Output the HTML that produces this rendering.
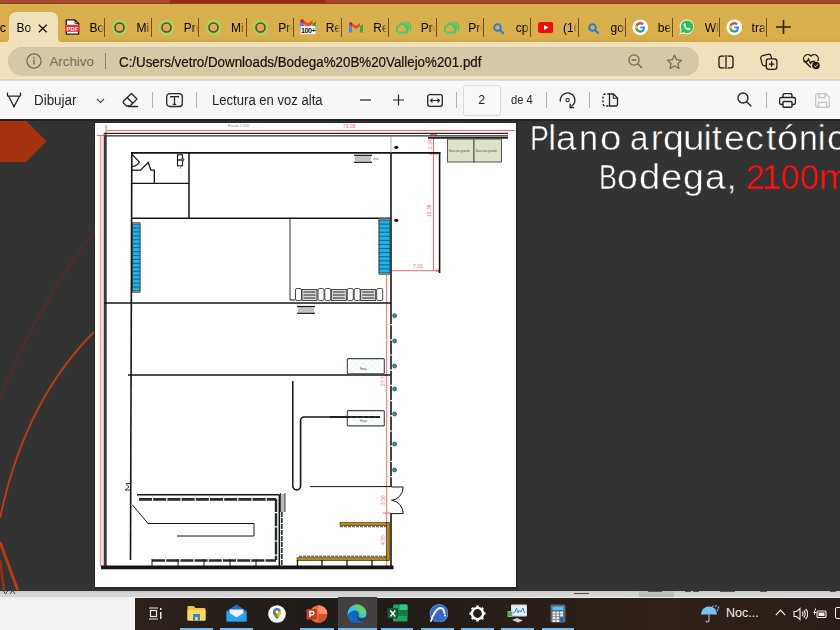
<!DOCTYPE html>
<html><head><meta charset="utf-8">
<style>
*{margin:0;padding:0;box-sizing:border-box}
html,body{width:840px;height:630px;overflow:hidden;background:#333;font-family:"Liberation Sans",sans-serif}
.a{position:absolute}
#topred{left:0;top:0;width:840px;height:4px;background:linear-gradient(90deg,#ac4632 0,#ac4632 170px,#a2261a 170px,#a2261a 326px,#a8442e 326px)}#topln{left:0;top:3px;width:840px;height:1px;background:#7a4a22}

#tabs{left:0;top:4px;width:840px;height:38px;background:#f0e1bb}#gl{left:0;top:4px;width:9px;height:38.5px;background:linear-gradient(#d9af4c 85%,#cea445);border-radius:0 0 5px 0}#gr{left:58px;top:4px;width:782px;height:38.5px;background:linear-gradient(#d9af4c 85%,#cea445);border-radius:0 0 0 5px}
#acttab{left:9px;top:12px;width:49px;height:31px;background:#f0e1bb;border-radius:7px 7px 0 0}#acttop{left:9px;top:4px;width:49px;height:16px;background:#d8ad4a}
.tt{font-size:12px;color:#000;white-space:nowrap;overflow:hidden}
.sep{width:1px;height:19px;top:18px;background:#6e5020}
#nav{left:0;top:42px;width:840px;height:37px;background:#f0e1bb}
#pill{left:8px;top:47.3px;width:691px;height:28.7px;background:#d5c8a4;border-radius:15px;box-shadow:inset 0 0.6px 0 #cdbf9a}
#tool{left:0;top:79.5px;width:840px;height:39.5px;background:#f7f7f7;border-top:1px solid #dcdcdc}#navln{left:0;top:77.8px;width:840px;height:2.6px;background:linear-gradient(#f5e6c4 0,#f5e6c4 40%,#d0c4a0 50%,#d8d2c2 80%,#e8e8e8)}
#toolb{left:0;top:118px;width:840px;height:1px;background:#fff}
#toolb2{left:0;top:119px;width:840px;height:2px;background:#232323}
#content{left:0;top:121px;width:840px;height:469px;background:#333}
#page{left:95px;top:123px;width:420.5px;height:464.2px;background:#fff;box-shadow:0.5px 0.5px 0 1.5px #272727}
#band{left:0;top:590.5px;width:840px;height:7px;background:linear-gradient(#c6c6c6,#d4d4d4 30%,#d6d6d6 80%,#ececec 85%,#ececec)}
#bl{left:0;top:597.5px;width:135px;height:33px;background:#f2f2f2}
#task{left:135px;top:597.5px;width:705px;height:33px;background:linear-gradient(90deg,#2e221b 0,#231e1a 16%,#1f1c19 27%,#241d18 45%,#2f2018 75%,#2a1e18 100%)}
.ts{font-size:14px;color:#222}
.tsep{width:1px;height:16px;top:92px;background:#b4b4b4}

.gl{font-size:35px;-webkit-text-stroke:0.45px #333;line-height:40px;white-space:nowrap;transform-origin:0 0}
</style></head><body>
<div id="topred" class="a"></div><div id="topln" class="a"></div>
<div id="tabs" class="a"></div><div id="gl" class="a"></div><div id="gr" class="a"></div><div id="acttop" class="a"></div>
<div id="acttab" class="a"></div>
<svg class="a" style="left:64.7px;top:19.4px" width="15" height="16" viewBox="0 0 15 16"><path d="M1.3 0.9h8.6l3.7 3.7V15.1H1.3z" fill="#fff" stroke="#241c18" stroke-width="1.4" stroke-linejoin="round"/><path d="M10 1v3.6h3.6" fill="none" stroke="#241c18" stroke-width="0.9"/><rect x="0.4" y="5.8" width="14" height="7" fill="#f2283a"/><text x="7.4" y="11.6" font-size="5.8" font-weight="bold" fill="#fff" text-anchor="middle" font-family="Liberation Sans">PDF</text></svg>
<div class="a tt" style="left:89.5px;top:19.5px;width:15px;height:16px;line-height:16px;-webkit-mask-image:linear-gradient(90deg,#000 55%,transparent 95%)">Bodega</div>
<svg class="a" style="left:110.6px;top:18.8px" width="17" height="17" viewBox="0 0 17 17"><circle cx="8.5" cy="8.5" r="6.9" fill="none" stroke="#94e060" stroke-width="1.7"/><circle cx="8.5" cy="8.5" r="4.5" fill="none" stroke="#5a4e3c" stroke-width="1.6"/></svg>
<div class="a tt" style="left:136.6px;top:19.5px;width:15px;height:16px;line-height:16px;-webkit-mask-image:linear-gradient(90deg,#000 55%,transparent 95%)">Mi curso</div>
<svg class="a" style="left:157.7px;top:18.8px" width="17" height="17" viewBox="0 0 17 17"><circle cx="8.5" cy="8.5" r="6.9" fill="none" stroke="#94e060" stroke-width="1.7"/><circle cx="8.5" cy="8.5" r="4.5" fill="none" stroke="#5a4e3c" stroke-width="1.6"/></svg>
<div class="a tt" style="left:183.7px;top:19.5px;width:15px;height:16px;line-height:16px;-webkit-mask-image:linear-gradient(90deg,#000 55%,transparent 95%)">Presenta</div>
<svg class="a" style="left:205.0px;top:18.8px" width="17" height="17" viewBox="0 0 17 17"><circle cx="8.5" cy="8.5" r="6.9" fill="none" stroke="#94e060" stroke-width="1.7"/><circle cx="8.5" cy="8.5" r="4.5" fill="none" stroke="#5a4e3c" stroke-width="1.6"/></svg>
<div class="a tt" style="left:231.0px;top:19.5px;width:15px;height:16px;line-height:16px;-webkit-mask-image:linear-gradient(90deg,#000 55%,transparent 95%)">Mi curso</div>
<svg class="a" style="left:252.3px;top:18.8px" width="17" height="17" viewBox="0 0 17 17"><circle cx="8.5" cy="8.5" r="6.9" fill="none" stroke="#94e060" stroke-width="1.7"/><circle cx="8.5" cy="8.5" r="4.5" fill="none" stroke="#5a4e3c" stroke-width="1.6"/></svg>
<div class="a tt" style="left:278.3px;top:19.5px;width:15px;height:16px;line-height:16px;-webkit-mask-image:linear-gradient(90deg,#000 55%,transparent 95%)">Presenta</div>
<svg class="a" style="left:300.3px;top:19.3px" width="16" height="16" viewBox="0 0 16 16"><g transform="translate(0,0) scale(1)"><path d="M0 2v10h3.5V4.5z" fill="#4285f4"/><path d="M12.5 4.5V12H16V2z" fill="#34a853"/><path d="M0 2l8 6 8-6-2-2-6 4.5L2 0z" fill="#ea4335"/><path d="M16 2l-2-2-1.5 1.2v3.3z" fill="#fbbc04"/><path d="M0 2l2-2 1.5 1.2v3.3z" fill="#c5221f"/></g><rect x="0.5" y="7.2" width="15" height="8" fill="#fff"/><text x="8" y="14.2" font-size="7.2" font-weight="bold" fill="#111" text-anchor="middle" font-family="Liberation Sans" letter-spacing="-0.5">100+</text></svg>
<div class="a tt" style="left:325.8px;top:19.5px;width:15px;height:16px;line-height:16px;-webkit-mask-image:linear-gradient(90deg,#000 55%,transparent 95%)">Recibidos</div>
<svg class="a" style="left:348.8px;top:22.3px" width="14" height="10.5" viewBox="0 0 14 10.5"><g transform="translate(0,0) scale(0.875)"><path d="M0 2v10h3.5V4.5z" fill="#4285f4"/><path d="M12.5 4.5V12H16V2z" fill="#34a853"/><path d="M0 2l8 6 8-6-2-2-6 4.5L2 0z" fill="#ea4335"/><path d="M16 2l-2-2-1.5 1.2v3.3z" fill="#fbbc04"/><path d="M0 2l2-2 1.5 1.2v3.3z" fill="#c5221f"/></g></svg>
<div class="a tt" style="left:373.3px;top:19.5px;width:15px;height:16px;line-height:16px;-webkit-mask-image:linear-gradient(90deg,#000 55%,transparent 95%)">Recibidos</div>
<svg class="a" style="left:395.3px;top:21.3px" width="17" height="13" viewBox="0 0 17 13"><path d="M2 11.5V6.5L7 2l5 4.5v5H5.5l-2 1.2" fill="none" stroke="#3acc78" stroke-width="1.8" stroke-linejoin="round"/><path d="M9.5 1.5l3.5 3v6" fill="none" stroke="#3acc78" stroke-width="1.5"/><path d="M12 0.8l3.5 3v6" fill="none" stroke="#3acc78" stroke-width="1.5"/></svg>
<div class="a tt" style="left:420.8px;top:19.5px;width:15px;height:16px;line-height:16px;-webkit-mask-image:linear-gradient(90deg,#000 55%,transparent 95%)">Propiedad</div>
<svg class="a" style="left:442.8px;top:21.3px" width="17" height="13" viewBox="0 0 17 13"><path d="M2 11.5V6.5L7 2l5 4.5v5H5.5l-2 1.2" fill="none" stroke="#3acc78" stroke-width="1.8" stroke-linejoin="round"/><path d="M9.5 1.5l3.5 3v6" fill="none" stroke="#3acc78" stroke-width="1.5"/><path d="M12 0.8l3.5 3v6" fill="none" stroke="#3acc78" stroke-width="1.5"/></svg>
<div class="a tt" style="left:468.3px;top:19.5px;width:15px;height:16px;line-height:16px;-webkit-mask-image:linear-gradient(90deg,#000 55%,transparent 95%)">Propiedad</div>
<svg class="a" style="left:493.3px;top:22.8px" width="11" height="11" viewBox="0 0 11 11"><circle cx="4.5" cy="4.5" r="3.3" fill="none" stroke="#2a7fd4" stroke-width="2"/><path d="M7 7l3 3" stroke="#2a7fd4" stroke-width="2.2" stroke-linecap="round"/></svg>
<div class="a tt" style="left:515.8px;top:19.5px;width:15px;height:16px;line-height:16px;-webkit-mask-image:linear-gradient(90deg,#000 55%,transparent 95%)">cpanel</div>
<svg class="a" style="left:537.9px;top:21.8px" width="15.5" height="11" viewBox="0 0 15.5 11"><rect x="0" y="0" width="15.5" height="11" rx="3" fill="#f40a0a"/><path d="M6 3v5l4.5-2.5z" fill="#fff"/></svg>
<div class="a tt" style="left:563.1px;top:19.5px;width:15px;height:16px;line-height:16px;-webkit-mask-image:linear-gradient(90deg,#000 55%,transparent 95%)">(16) YouTube</div>
<svg class="a" style="left:588.0px;top:22.8px" width="11" height="11" viewBox="0 0 11 11"><circle cx="4.5" cy="4.5" r="3.3" fill="none" stroke="#2a7fd4" stroke-width="2"/><path d="M7 7l3 3" stroke="#2a7fd4" stroke-width="2.2" stroke-linecap="round"/></svg>
<div class="a tt" style="left:610.5px;top:19.5px;width:15px;height:16px;line-height:16px;-webkit-mask-image:linear-gradient(90deg,#000 55%,transparent 95%)">google</div>
<svg class="a" style="left:632.0px;top:19.0px" width="16.6" height="16.6" viewBox="0 0 16 16"><circle cx="8" cy="8" r="7.6" fill="#fff"/><path d="M12.4 7.3H8v1.8h2.6c-.3 1.2-1.3 2-2.6 2a3 3 0 1 1 1.9-5.4l1.3-1.3A4.9 4.9 0 1 0 8 13c2.7 0 4.6-1.9 4.6-4.7 0-.4 0-.7-.2-1z" fill="#4285f4"/><path d="M3.6 5.6L5.2 6.8A3 3 0 0 1 9.9 5.7l1.3-1.3A4.9 4.9 0 0 0 3.6 5.6z" fill="#ea4335"/><path d="M3.1 8a4.9 4.9 0 0 0 .5 2.2l1.6-1.2a3 3 0 0 1 0-2.2L3.6 5.6A4.9 4.9 0 0 0 3.1 8z" fill="#fbbc05"/><path d="M8 12.9a4.9 4.9 0 0 1-4.4-2.7l1.6-1.2A3 3 0 0 0 8 11.1c.8 0 1.4-.2 1.9-.6l1.5 1.2A4.8 4.8 0 0 1 8 12.9z" fill="#34a853"/></svg>
<div class="a tt" style="left:657.8px;top:19.5px;width:15px;height:16px;line-height:16px;-webkit-mask-image:linear-gradient(90deg,#000 55%,transparent 95%)">beneficios</div>
<svg class="a" style="left:679.3px;top:19.3px" width="16" height="16" viewBox="0 0 16 16"><path d="M8 0.5a7.3 7.3 0 0 0-6.3 11l-1.2 4 4.1-1.1A7.3 7.3 0 1 0 8 0.5z" fill="#fff"/><path d="M8 1.6a6.3 6.3 0 0 0-5.4 9.5l-.9 3 3.1-.8A6.3 6.3 0 1 0 8 1.6z" fill="#2bc152"/><path d="M5.3 4.2c.2-.2.6-.2.8 0l.9 1.7c.1.3 0 .5-.2.7l-.5.5c.5 1 1.3 1.8 2.3 2.3l.5-.5c.2-.2.5-.3.7-.2l1.7.8c.2.1.3.5.1.8-.5 1-1.4 1.3-2.3 1-2.3-.7-4.1-2.5-4.7-4.7-.2-.9.2-1.8 1-2.4z" fill="#fff"/></svg>
<div class="a tt" style="left:704.8px;top:19.5px;width:15px;height:16px;line-height:16px;-webkit-mask-image:linear-gradient(90deg,#000 55%,transparent 95%)">WhatsApp</div>
<svg class="a" style="left:725.8px;top:19.0px" width="16.6" height="16.6" viewBox="0 0 16 16"><circle cx="8" cy="8" r="7.6" fill="#fff"/><path d="M12.4 7.3H8v1.8h2.6c-.3 1.2-1.3 2-2.6 2a3 3 0 1 1 1.9-5.4l1.3-1.3A4.9 4.9 0 1 0 8 13c2.7 0 4.6-1.9 4.6-4.7 0-.4 0-.7-.2-1z" fill="#4285f4"/><path d="M3.6 5.6L5.2 6.8A3 3 0 0 1 9.9 5.7l1.3-1.3A4.9 4.9 0 0 0 3.6 5.6z" fill="#ea4335"/><path d="M3.1 8a4.9 4.9 0 0 0 .5 2.2l1.6-1.2a3 3 0 0 1 0-2.2L3.6 5.6A4.9 4.9 0 0 0 3.1 8z" fill="#fbbc05"/><path d="M8 12.9a4.9 4.9 0 0 1-4.4-2.7l1.6-1.2A3 3 0 0 0 8 11.1c.8 0 1.4-.2 1.9-.6l1.5 1.2A4.8 4.8 0 0 1 8 12.9z" fill="#34a853"/></svg>
<div class="a tt" style="left:751.6px;top:19.5px;width:15px;height:16px;line-height:16px;-webkit-mask-image:linear-gradient(90deg,#000 55%,transparent 95%)">traductor</div>
<div class="a sep" style="left:103.8px"></div>
<div class="a sep" style="left:150.9px"></div>
<div class="a sep" style="left:198.2px"></div>
<div class="a sep" style="left:245.5px"></div>
<div class="a sep" style="left:293.0px"></div>
<div class="a sep" style="left:340.5px"></div>
<div class="a sep" style="left:388.0px"></div>
<div class="a sep" style="left:435.5px"></div>
<div class="a sep" style="left:483.0px"></div>
<div class="a sep" style="left:530.3px"></div>
<div class="a sep" style="left:577.7px"></div>
<div class="a sep" style="left:625.0px"></div>
<div class="a sep" style="left:672.0px"></div>
<div class="a sep" style="left:718.8px"></div>
<div class="a sep" style="left:766.1px"></div>
<div class="a tt" style="left:-7px;top:20px;width:14px;height:16px;line-height:16px">pc</div>
<div class="a tt" style="left:16.5px;top:20px;width:15px;height:16px;line-height:16px;-webkit-mask-image:linear-gradient(90deg,#000 80%,transparent)">Bodega</div>
<svg class="a" style="left:38.0px;top:23.5px" width="9.5" height="9" viewBox="0 0 9.5 9"><path d="M0.8 0.8l7.9 7.4M8.7 0.8L0.8 8.2" stroke="#1a1408" stroke-width="1.3"/></svg>
<svg class="a" style="left:776.0px;top:20.0px" width="15" height="14" viewBox="0 0 15 14"><path d="M7.5 0v14M0 7h15" stroke="#2a2010" stroke-width="1.6"/></svg>
<div id="nav" class="a"></div>
<div id="pill" class="a"></div>
<svg class="a" style="left:25.5px;top:53.0px" width="16" height="16" viewBox="0 0 16 16"><circle cx="8" cy="8" r="7.1" fill="none" stroke="#736a5c" stroke-width="1.2"/><rect x="7.35" y="6.6" width="1.3" height="5" fill="#736a5c"/><circle cx="8" cy="4.6" r="0.85" fill="#736a5c"/></svg>
<div class="a" style="left:49.5px;top:52.8px;font-size:13.3px;line-height:18px;color:#736a5c;white-space:nowrap" id="archivo">Archivo</div>
<div class="a" style="left:105.2px;top:53px;width:1.2px;height:16px;background:#8c8272"></div>
<div class="a" style="left:119px;top:52.5px;font-size:14px;line-height:18px;color:#17110a;-webkit-text-stroke:0.2px #17110a;white-space:nowrap;transform:scaleX(0.953);transform-origin:0 0" id="url">C:/Users/vetro/Downloads/Bodega%20B%20Vallejo%201.pdf</div>
<svg class="a" style="left:628.0px;top:53.5px" width="15" height="15" viewBox="0 0 15 15"><circle cx="6" cy="6" r="5.1" fill="none" stroke="#736a5c" stroke-width="1.3"/><path d="M3.5 6h5M9.8 9.8l4.2 4.2" stroke="#736a5c" stroke-width="1.3"/></svg>
<svg class="a" style="left:666.0px;top:53.5px" width="17" height="15" viewBox="0 0 17 15"><path d="M8.5 1.2l2.1 4.5 4.9.6-3.6 3.3 1 4.8-4.4-2.4-4.4 2.4 1-4.8L1.5 6.3l4.9-.6z" fill="none" stroke="#736a5c" stroke-width="1.2" stroke-linejoin="round"/></svg>
<svg class="a" style="left:718.0px;top:54.5px" width="16" height="14" viewBox="0 0 16 14"><path d="M6.5 1.2H3a2 2 0 0 0-2 2v7.6a2 2 0 0 0 2 2h3.5M9.5 1.2H13a2 2 0 0 1 2 2v7.6a2 2 0 0 1-2 2H9.5" fill="none" stroke="#1f1a12" stroke-width="1.3"/><path d="M8 0v14" stroke="#1f1a12" stroke-width="1.3"/></svg>
<svg class="a" style="left:760.0px;top:53.0px" width="18" height="17" viewBox="0 0 18 17"><rect x="1.3" y="1.8" width="10.5" height="10.5" rx="2.6" fill="none" stroke="#1f1a12" stroke-width="1.2" transform="rotate(-14 6.5 7)"/><rect x="6.3" y="5.8" width="10.6" height="10.5" rx="2.4" fill="#f0e1bb" stroke="#1f1a12" stroke-width="1.3"/><path d="M11.6 8.3v5.5M8.85 11.05h5.5" stroke="#1f1a12" stroke-width="1.3"/></svg>
<svg class="a" style="left:802.0px;top:53.0px" width="19" height="17" viewBox="0 0 19 17"><path d="M9 14.5L2.5 8.3A4 4 0 0 1 9 3.2a4 4 0 0 1 6.5 5" fill="none" stroke="#1f1a12" stroke-width="1.3"/><path d="M1.5 8.5h3.5l1.5-2.5 2 4.5 1.5-2h3" fill="none" stroke="#1f1a12" stroke-width="1.3"/><circle cx="14" cy="12.5" r="3.8" fill="#1f1a12"/><path d="M12.3 12.6l1.2 1.1 2.3-2.4" fill="none" stroke="#f0e1bb" stroke-width="1"/></svg>
<div id="navln" class="a"></div><div id="tool" class="a"></div>
<div id="toolb" class="a"></div>
<div id="toolb2" class="a"></div>
<svg class="a" style="left:6.0px;top:91.5px" width="16" height="17" viewBox="0 0 16 17"><path d="M1.5 0.5v3.8M14.5 0.5v3.8M1.5 4.2h13M2.6 4.2L8 14.6 13.4 4.2" fill="none" stroke="#242424" stroke-width="1.25" stroke-linejoin="round"/><path d="M7 14.2l1 1.6 1-1.6z" fill="#242424"/></svg>
<div class="a" style="left:34px;top:91px;font-size:14px;line-height:18px;color:#242424;white-space:nowrap;transform:scaleX(0.957);transform-origin:0 0" id="dib">Dibujar</div>
<svg class="a" style="left:95.5px;top:98.3px" width="9" height="6" viewBox="0 0 9 6"><path d="M1 1l3.5 3.5L8 1" fill="none" stroke="#444" stroke-width="1.1"/></svg>
<svg class="a" style="left:121.5px;top:91.5px" width="17" height="16" viewBox="0 0 17 16"><path d="M9.5 1.5l5.5 5.5-7 7H4.5L1.5 11a1.4 1.4 0 0 1 0-2z" fill="none" stroke="#242424" stroke-width="1.3" stroke-linejoin="round"/><path d="M5 5.5l5.5 5.5M6 14.5h10" stroke="#242424" stroke-width="1.3"/></svg>
<div class="a tsep" style="left:152px"></div>
<svg class="a" style="left:165.5px;top:92.5px" width="17" height="15" viewBox="0 0 17 15"><rect x="0.7" y="0.7" width="15.6" height="12.8" rx="3" fill="none" stroke="#242424" stroke-width="1.3"/><path d="M4.7 4.7V3.7h7.6v1M8.5 3.7v7.6M6.8 11.3h3.4" fill="none" stroke="#242424" stroke-width="1.2"/></svg>
<div class="a tsep" style="left:196px"></div>
<div class="a" style="left:212px;top:91px;font-size:14px;line-height:18px;color:#242424;white-space:nowrap;transform:scaleX(0.935);transform-origin:0 0" id="lect">Lectura en voz alta</div>
<svg class="a" style="left:359.5px;top:98.5px" width="12" height="2" viewBox="0 0 12 2"><path d="M0 1h11" stroke="#242424" stroke-width="1.2"/></svg>
<svg class="a" style="left:392.5px;top:93.5px" width="12" height="12" viewBox="0 0 12 12"><path d="M0 6h11M5.5 0.5v11" stroke="#242424" stroke-width="1.2"/></svg>
<svg class="a" style="left:426.5px;top:93.5px" width="17" height="13" viewBox="0 0 17 13"><rect x="0.7" y="0.7" width="14.6" height="11.6" rx="2" fill="none" stroke="#242424" stroke-width="1.3"/><path d="M3.5 6.5h9M5.5 4.5l-2 2 2 2M10.5 4.5l2 2-2 2" fill="none" stroke="#242424" stroke-width="1.1"/></svg>
<div class="a tsep" style="left:456px"></div>
<div class="a" style="left:462.5px;top:84.5px;width:38px;height:31px;border:1px solid #d8d8d8;border-radius:3px;background:#f9f9f9"></div>
<div class="a" style="left:462.5px;top:91px;width:38px;text-align:center;font-size:12px;line-height:18px;color:#242424" id="pgn">2</div>
<div class="a" style="left:510.5px;top:91px;font-size:12px;line-height:18px;color:#242424;white-space:nowrap;transform:scaleX(0.93);transform-origin:0 0" id="de4">de 4</div>
<div class="a tsep" style="left:545.5px"></div>
<svg class="a" style="left:558.5px;top:91.5px" width="18" height="18" viewBox="0 0 18 18"><path d="M1.4 9.6A7.3 7.3 0 1 1 12.3 14.5" fill="none" stroke="#242424" stroke-width="1.3"/><path d="M11.2 11.8v3.8h3.9" fill="none" stroke="#242424" stroke-width="1.4"/><circle cx="8.6" cy="8.1" r="1.6" fill="none" stroke="#242424" stroke-width="1.1"/></svg>
<div class="a tsep" style="left:589px"></div>
<svg class="a" style="left:601.5px;top:93.0px" width="17" height="14" viewBox="0 0 17 14"><path d="M7.5 1H3.3A2.3 2.3 0 0 0 1 3.3v7.4A2.3 2.3 0 0 0 3.3 13h4.2" fill="none" stroke="#242424" stroke-width="1.3" stroke-dasharray="2.2 1.6"/><path d="M7.5 1h4l4 4v5.7a2.3 2.3 0 0 1-2.3 2.3H7.5z" fill="none" stroke="#242424" stroke-width="1.3"/><path d="M11.3 1v4.2h4.2" fill="none" stroke="#242424" stroke-width="1.1"/></svg>
<svg class="a" style="left:736.5px;top:92.0px" width="15" height="15" viewBox="0 0 15 15"><circle cx="6" cy="6" r="5" fill="none" stroke="#242424" stroke-width="1.4"/><path d="M9.7 9.7l4.5 4.5" stroke="#242424" stroke-width="1.4"/></svg>
<div class="a tsep" style="left:765.5px"></div>
<svg class="a" style="left:779.0px;top:92.5px" width="17" height="15" viewBox="0 0 17 15"><path d="M4 4.5V2.5a2 2 0 0 1 2-2h5a2 2 0 0 1 2 2v2" fill="none" stroke="#242424" stroke-width="1.4"/><path d="M4 11.5H2.5a2 2 0 0 1-2-2V6.5a2 2 0 0 1 2-2h12a2 2 0 0 1 2 2v3a2 2 0 0 1-2 2H13" fill="none" stroke="#242424" stroke-width="1.4"/><rect x="4" y="8.5" width="9" height="5.8" rx="1" fill="none" stroke="#242424" stroke-width="1.4"/></svg>
<svg class="a" style="left:815.0px;top:92.5px" width="15" height="15" viewBox="0 0 15 15"><path d="M0.7 2.5a1.8 1.8 0 0 1 1.8-1.8h8.3l3.5 3.5v8.3a1.8 1.8 0 0 1-1.8 1.8H2.5a1.8 1.8 0 0 1-1.8-1.8z" fill="none" stroke="#c4c4c4" stroke-width="1.3"/><path d="M4 0.7v4h6v-4M3.5 14.3v-5h8v5" fill="none" stroke="#c4c4c4" stroke-width="1.3"/></svg>
<div id="content" class="a"></div>
<svg class="a" style="left:0;top:121px" width="95" height="469" viewBox="0 121 95 469"><path d="M0 120.5H26L46.3 141.3 26 162H0z" fill="#a5320f"/><path d="M95 231Q40 300 0 398" fill="none" stroke="#5a2c22" stroke-width="1.7"/><path d="M95 331Q25 400 0 518" fill="none" stroke="#b03c18" stroke-width="2"/><path d="M0 542L18 591" fill="none" stroke="#b83a12" stroke-width="3"/><path d="M0 560L4 591" fill="none" stroke="#9a3212" stroke-width="2.5"/></svg>
<div class="a gl" style="left:530.48px;top:117.5px;color:#fff;transform:scaleX(0.810);-webkit-text-stroke-color:#333">P</div>
<div class="a gl" style="left:548.35px;top:117.5px;color:#fff;transform:scaleX(1.000);-webkit-text-stroke-color:#333">l</div>
<div class="a gl" style="left:555.85px;top:117.5px;color:#fff;transform:scaleX(1.053);-webkit-text-stroke-color:#333">a</div>
<div class="a gl" style="left:578.74px;top:117.5px;color:#fff;transform:scaleX(0.981);-webkit-text-stroke-color:#333">n</div>
<div class="a gl" style="left:599.50px;top:117.5px;color:#fff;transform:scaleX(1.100);-webkit-text-stroke-color:#333">o</div>
<div class="a gl" style="left:630.45px;top:117.5px;color:#fff;transform:scaleX(0.953);-webkit-text-stroke-color:#333">a</div>
<div class="a gl" style="left:651.10px;top:117.5px;color:#fff;transform:scaleX(1.000);-webkit-text-stroke-color:#333">r</div>
<div class="a gl" style="left:663.24px;top:117.5px;color:#fff;transform:scaleX(1.065);-webkit-text-stroke-color:#333">q</div>
<div class="a gl" style="left:682.99px;top:117.5px;color:#fff;transform:scaleX(1.106);-webkit-text-stroke-color:#333">u</div>
<div class="a gl" style="left:703.85px;top:117.5px;color:#fff;transform:scaleX(1.000);-webkit-text-stroke-color:#333">i</div>
<div class="a gl" style="left:711.90px;top:117.5px;color:#fff;transform:scaleX(1.000);-webkit-text-stroke-color:#333">t</div>
<div class="a gl" style="left:723.74px;top:117.5px;color:#fff;transform:scaleX(1.065);-webkit-text-stroke-color:#333">e</div>
<div class="a gl" style="left:745.42px;top:117.5px;color:#fff;transform:scaleX(1.081);-webkit-text-stroke-color:#333">c</div>
<div class="a gl" style="left:766.25px;top:117.5px;color:#fff;transform:scaleX(1.000);-webkit-text-stroke-color:#333">t</div>
<div class="a gl" style="left:777.02px;top:117.5px;color:#fff;transform:scaleX(1.082);-webkit-text-stroke-color:#333">ó</div>
<div class="a gl" style="left:798.76px;top:117.5px;color:#fff;transform:scaleX(0.969);-webkit-text-stroke-color:#333">n</div>
<div class="a gl" style="left:817.85px;top:117.5px;color:#fff;transform:scaleX(1.000);-webkit-text-stroke-color:#333">i</div>
<div class="a gl" style="left:827.04px;top:117.5px;color:#fff;transform:scaleX(1.056);-webkit-text-stroke-color:#333">c</div>
<div class="a gl" style="left:598.67px;top:156.8px;color:#fff;transform:scaleX(0.765);-webkit-text-stroke-color:#333">B</div>
<div class="a gl" style="left:616.84px;top:156.8px;color:#fff;transform:scaleX(1.065);-webkit-text-stroke-color:#333">o</div>
<div class="a gl" style="left:639.11px;top:156.8px;color:#fff;transform:scaleX(1.094);-webkit-text-stroke-color:#333">d</div>
<div class="a gl" style="left:661.31px;top:156.8px;color:#fff;transform:scaleX(1.094);-webkit-text-stroke-color:#333">e</div>
<div class="a gl" style="left:682.74px;top:156.8px;color:#fff;transform:scaleX(1.065);-webkit-text-stroke-color:#333">g</div>
<div class="a gl" style="left:704.65px;top:156.8px;color:#fff;transform:scaleX(1.053);-webkit-text-stroke-color:#333">a</div>
<div class="a gl" style="left:726.70px;top:156.8px;color:#fff;transform:scaleX(1.000);-webkit-text-stroke-color:#333">,</div>
<div class="a gl" style="left:745.52px;top:156.8px;color:#ff0f0f;transform:scaleX(0.982);-webkit-text-stroke-color:#333">2</div>
<div class="a gl" style="left:761.55px;top:156.8px;color:#ff0f0f;transform:scaleX(1.000);-webkit-text-stroke-color:#333">1</div>
<div class="a gl" style="left:781.34px;top:156.8px;color:#ff0f0f;transform:scaleX(0.956);-webkit-text-stroke-color:#333">0</div>
<div class="a gl" style="left:799.71px;top:156.8px;color:#ff0f0f;transform:scaleX(0.994);-webkit-text-stroke-color:#333">0</div>
<div class="a gl" style="left:818.84px;top:156.8px;color:#ff0f0f;transform:scaleX(1.080);-webkit-text-stroke-color:#333">m</div>
<div id="page" class="a"></div>
<svg class="a" style="left:0;top:0" width="840" height="630" viewBox="0 0 840 630"><line x1="106" y1="130.5" x2="515" y2="130.5" stroke="#f26a6a" stroke-width="1" /><line x1="106" y1="125" x2="106" y2="136" stroke="#f26a6a" stroke-width="1" /><line x1="100.3" y1="135.5" x2="100.3" y2="566" stroke="#f26a6a" stroke-width="0.9" /><line x1="102" y1="136" x2="102" y2="566" stroke="#f8b0b0" stroke-width="0.8" /><line x1="97" y1="135.5" x2="106" y2="135.5" stroke="#f26a6a" stroke-width="1" /><line x1="433.5" y1="137" x2="433.5" y2="271" stroke="#f26a6a" stroke-width="1" /><line x1="430" y1="134.5" x2="437" y2="134.5" stroke="#f26a6a" stroke-width="1.6" /><line x1="429" y1="153.5" x2="438" y2="153.5" stroke="#f26a6a" stroke-width="2" /><line x1="436" y1="270.7" x2="439" y2="270.7" stroke="#f26a6a" stroke-width="2" /><line x1="391" y1="270.7" x2="439" y2="270.7" stroke="#f26a6a" stroke-width="1" /><line x1="386.7" y1="273" x2="386.7" y2="566" stroke="#f26a6a" stroke-width="1" /><line x1="383" y1="486.5" x2="391" y2="486.5" stroke="#f26a6a" stroke-width="1" /><line x1="383" y1="513" x2="391" y2="513" stroke="#f26a6a" stroke-width="1" /><text x="343" y="127.5" font-size="5" fill="#f26a6a" font-family="Liberation Sans" >73.06</text><text x="228" y="126.5" font-size="3.6" fill="#888" font-family="Liberation Sans" >Escala 1:133</text><text x="413" y="267.5" font-size="5" fill="#f26a6a" font-family="Liberation Sans" >7.01</text><text x="432" y="149" font-size="5" fill="#f26a6a" font-family="Liberation Sans" transform="rotate(-90 432 149)">2.34</text><text x="431" y="217" font-size="5" fill="#f26a6a" font-family="Liberation Sans" transform="rotate(-90 431 217)">15.36</text><text x="385" y="386" font-size="5" fill="#f26a6a" font-family="Liberation Sans" transform="rotate(-90 385 386)">27.75</text><text x="385" y="505" font-size="5" fill="#f26a6a" font-family="Liberation Sans" transform="rotate(-90 385 505)">3.50</text><text x="385" y="545" font-size="5" fill="#f26a6a" font-family="Liberation Sans" transform="rotate(-90 385 545)">4.55</text><path d="M105.2 566V134.4" stroke="#3a3a3a" stroke-width="3" fill="none" /><line x1="103.7" y1="133.4" x2="508" y2="133.4" stroke="#2a2a2a" stroke-width="1.3" /><line x1="106" y1="135.8" x2="508" y2="135.8" stroke="#2a2a2a" stroke-width="1.2" /><line x1="428" y1="137.9" x2="508" y2="137.9" stroke="#222" stroke-width="1.6" /><line x1="105.2" y1="567" x2="105.2" y2="566" stroke="#333" stroke-width="1" /><line x1="131" y1="152.9" x2="440.5" y2="152.9" stroke="#151515" stroke-width="1.6" /><path d="M131.8 153L130.5 560" stroke="#151515" stroke-width="1.6" fill="none" /><line x1="439.6" y1="152.5" x2="439.6" y2="273" stroke="#151515" stroke-width="1.6" /><line x1="391" y1="137" x2="391" y2="153" stroke="#999" stroke-width="0.8" /><line x1="391" y1="153" x2="391" y2="310" stroke="#151515" stroke-width="1.6" /><line x1="391" y1="310" x2="391" y2="487" stroke="#151515" stroke-width="1.6" stroke-dasharray="14 1.2"/><line x1="391" y1="513" x2="391" y2="567" stroke="#151515" stroke-width="1.6" /><line x1="189" y1="153" x2="189" y2="218" stroke="#151515" stroke-width="1.5" /><line x1="131" y1="183.3" x2="189" y2="183.3" stroke="#151515" stroke-width="1.3" /><path d="M131.8 154L139.4 162.1A8.5 8.5 0 0 1 131.8 166.3" stroke="#151515" stroke-width="1.1" fill="none" /><path d="M131.5 170.1H140.6L148.2 162.5 150.9 170.1H154.3V183.1" stroke="#151515" stroke-width="1.3" fill="none" /><line x1="131" y1="218.3" x2="391" y2="218.3" stroke="#151515" stroke-width="1.6" /><line x1="290" y1="219" x2="290" y2="300" stroke="#333" stroke-width="1" /><path d="M290 300h5" stroke="#151515" stroke-width="1" fill="none" /><line x1="104" y1="303" x2="391" y2="303" stroke="#151515" stroke-width="1.5" /><line x1="128" y1="375" x2="391" y2="375" stroke="#151515" stroke-width="1.4" /><line x1="292.8" y1="381" x2="292.8" y2="486" stroke="#151515" stroke-width="1.5" /><path d="M292.8 486a3.9 3.9 0 0 0 7.8 0V420.5a3.5 3.5 0 0 1 3.5-3.5H380" stroke="#151515" stroke-width="1.6" fill="none" /><line x1="310" y1="486.6" x2="391" y2="486.6" stroke="#151515" stroke-width="1" /><path d="M391.5 487H403.2A12.5 13.3 0 0 1 391.5 500.3A12.5 13.3 0 0 1 403.2 513.6H391.5" stroke="#151515" stroke-width="1" fill="none" /><line x1="101" y1="567.4" x2="393.5" y2="567.4" stroke="#151515" stroke-width="3.6" /><path d="M131 483.5h-5l3 3.5-4 3h6" stroke="#151515" stroke-width="0.8" fill="none" /><line x1="137" y1="494.7" x2="279.5" y2="494.7" stroke="#151515" stroke-width="1.6" /><line x1="139" y1="499.3" x2="276" y2="499.3" stroke="#2a2a2a" stroke-width="2.8" stroke-dasharray="13 1.2"/><line x1="279.3" y1="494.7" x2="279.3" y2="566" stroke="#151515" stroke-width="1.5" /><line x1="276" y1="499" x2="276" y2="560" stroke="#2a2a2a" stroke-width="2.4" stroke-dasharray="13 1.2"/><path d="M132.5 505L148 523.5H254V536H177" stroke="#151515" stroke-width="1" fill="none" /><line x1="152" y1="560.5" x2="276" y2="560.5" stroke="#2a2a2a" stroke-width="2.6" stroke-dasharray="13 1.2"/><line x1="152" y1="559" x2="152" y2="566" stroke="#151515" stroke-width="1" /><line x1="178" y1="559" x2="178" y2="566" stroke="#151515" stroke-width="1" /><line x1="204" y1="559" x2="204" y2="566" stroke="#151515" stroke-width="1" /><line x1="230" y1="559" x2="230" y2="566" stroke="#151515" stroke-width="1" /><line x1="256" y1="559" x2="256" y2="566" stroke="#151515" stroke-width="1" /><line x1="281.8" y1="512" x2="281.8" y2="566" stroke="#1d3a48" stroke-width="1.8" stroke-dasharray="5 1"/><line x1="280.5" y1="493" x2="280.5" y2="512" stroke="#151515" stroke-width="0.8" /><line x1="285" y1="493" x2="285" y2="512" stroke="#151515" stroke-width="0.8" /><line x1="280.5" y1="495" x2="285" y2="495" stroke="#151515" stroke-width="0.6" /><line x1="280.5" y1="497" x2="285" y2="497" stroke="#151515" stroke-width="0.6" /><line x1="280.5" y1="499" x2="285" y2="499" stroke="#151515" stroke-width="0.6" /><line x1="280.5" y1="501" x2="285" y2="501" stroke="#151515" stroke-width="0.6" /><line x1="280.5" y1="503" x2="285" y2="503" stroke="#151515" stroke-width="0.6" /><line x1="280.5" y1="505" x2="285" y2="505" stroke="#151515" stroke-width="0.6" /><line x1="280.5" y1="507" x2="285" y2="507" stroke="#151515" stroke-width="0.6" /><line x1="280.5" y1="509" x2="285" y2="509" stroke="#151515" stroke-width="0.6" /><line x1="280.5" y1="511" x2="285" y2="511" stroke="#151515" stroke-width="0.6" /><line x1="340" y1="526.6" x2="386" y2="526.6" stroke="#666" stroke-width="1.2" stroke-dasharray="3 1"/><line x1="299" y1="556.3" x2="386" y2="556.3" stroke="#666" stroke-width="1.2" stroke-dasharray="3 1"/><rect x="340" y="522.6" width="48.6" height="3" fill="#b8861c" stroke="#3a2a08" stroke-width="0.6" /><rect x="297" y="557.7" width="91.6" height="3" fill="#b8861c" stroke="#3a2a08" stroke-width="0.6" /><rect x="386.6" y="522.6" width="2.8" height="38" fill="#b8861c" stroke="#3a2a08" stroke-width="0.6" /><line x1="297.5" y1="560" x2="297.5" y2="566" stroke="#151515" stroke-width="1.3" /><line x1="322" y1="560" x2="322" y2="566" stroke="#151515" stroke-width="1.3" /><line x1="347" y1="560" x2="347" y2="566" stroke="#151515" stroke-width="1.3" /><line x1="372" y1="560" x2="372" y2="566" stroke="#151515" stroke-width="1.3" /><rect x="132.5" y="222.5" width="7.5" height="70" fill="#bbb" stroke="#555" stroke-width="0.7" /><rect x="132.5" y="224" width="7.5" height="67" fill="#1fb2e6" stroke="#333" stroke-width="0.8" /><line x1="132.5" y1="227.94" x2="140.0" y2="227.94" stroke="#14405a" stroke-width="0.7" /><line x1="132.5" y1="231.88" x2="140.0" y2="231.88" stroke="#14405a" stroke-width="0.7" /><line x1="132.5" y1="235.82" x2="140.0" y2="235.82" stroke="#14405a" stroke-width="0.7" /><line x1="132.5" y1="239.76" x2="140.0" y2="239.76" stroke="#14405a" stroke-width="0.7" /><line x1="132.5" y1="243.71" x2="140.0" y2="243.71" stroke="#14405a" stroke-width="0.7" /><line x1="132.5" y1="247.65" x2="140.0" y2="247.65" stroke="#14405a" stroke-width="0.7" /><line x1="132.5" y1="251.59" x2="140.0" y2="251.59" stroke="#14405a" stroke-width="0.7" /><line x1="132.5" y1="255.53" x2="140.0" y2="255.53" stroke="#14405a" stroke-width="0.7" /><line x1="132.5" y1="259.47" x2="140.0" y2="259.47" stroke="#14405a" stroke-width="0.7" /><line x1="132.5" y1="263.41" x2="140.0" y2="263.41" stroke="#14405a" stroke-width="0.7" /><line x1="132.5" y1="267.35" x2="140.0" y2="267.35" stroke="#14405a" stroke-width="0.7" /><line x1="132.5" y1="271.29" x2="140.0" y2="271.29" stroke="#14405a" stroke-width="0.7" /><line x1="132.5" y1="275.24" x2="140.0" y2="275.24" stroke="#14405a" stroke-width="0.7" /><line x1="132.5" y1="279.18" x2="140.0" y2="279.18" stroke="#14405a" stroke-width="0.7" /><line x1="132.5" y1="283.12" x2="140.0" y2="283.12" stroke="#14405a" stroke-width="0.7" /><line x1="132.5" y1="287.06" x2="140.0" y2="287.06" stroke="#14405a" stroke-width="0.7" /><rect x="379" y="218.5" width="11" height="56" fill="#bbb" stroke="#555" stroke-width="0.7" /><rect x="379" y="220" width="11" height="53" fill="#1fb2e6" stroke="#333" stroke-width="0.8" /><line x1="379" y1="224.08" x2="390" y2="224.08" stroke="#14405a" stroke-width="0.7" /><line x1="379" y1="228.15" x2="390" y2="228.15" stroke="#14405a" stroke-width="0.7" /><line x1="379" y1="232.23" x2="390" y2="232.23" stroke="#14405a" stroke-width="0.7" /><line x1="379" y1="236.31" x2="390" y2="236.31" stroke="#14405a" stroke-width="0.7" /><line x1="379" y1="240.38" x2="390" y2="240.38" stroke="#14405a" stroke-width="0.7" /><line x1="379" y1="244.46" x2="390" y2="244.46" stroke="#14405a" stroke-width="0.7" /><line x1="379" y1="248.54" x2="390" y2="248.54" stroke="#14405a" stroke-width="0.7" /><line x1="379" y1="252.62" x2="390" y2="252.62" stroke="#14405a" stroke-width="0.7" /><line x1="379" y1="256.69" x2="390" y2="256.69" stroke="#14405a" stroke-width="0.7" /><line x1="379" y1="260.77" x2="390" y2="260.77" stroke="#14405a" stroke-width="0.7" /><line x1="379" y1="264.85" x2="390" y2="264.85" stroke="#14405a" stroke-width="0.7" /><line x1="379" y1="268.92" x2="390" y2="268.92" stroke="#14405a" stroke-width="0.7" /><rect x="447.5" y="139" width="26.5" height="23" fill="#dfe1c9" stroke="#444" stroke-width="0.9" /><rect x="474" y="139" width="27.5" height="23" fill="#dfe1c9" stroke="#444" stroke-width="0.9" /><text x="449" y="151.5" font-size="3" fill="#555" font-family="Liberation Sans" >Bascula grande</text><text x="476" y="151.5" font-size="3" fill="#555" font-family="Liberation Sans" >Bascula grande</text><defs><pattern id="xh" width="6" height="6" patternUnits="userSpaceOnUse"><path d="M0 0l6 6M6 0L0 6" stroke="#d8eef2" stroke-width="0.5"/></pattern></defs><rect x="347.3" y="358.6" width="37" height="15.3" fill="url(#xh)" stroke="#444" stroke-width="1.1" rx="1"/><text x="360" y="369.6" font-size="3" fill="#333" font-family="Liberation Sans" >Fosa</text><rect x="347.3" y="410.6" width="37" height="15.3" fill="url(#xh)" stroke="#444" stroke-width="1.1" rx="1"/><text x="360" y="421.6" font-size="3" fill="#333" font-family="Liberation Sans" >Fosa</text><line x1="330" y1="417" x2="380" y2="417" stroke="#151515" stroke-width="1.6" /><rect x="295.5" y="288.5" width="6" height="12" fill="#fff" stroke="#333" stroke-width="0.9" rx="1.5"/><rect x="302.0" y="289.5" width="15" height="11" fill="#ddd" stroke="#333" stroke-width="0.9" /><line x1="303.5" y1="292" x2="315.5" y2="292" stroke="#222" stroke-width="1" /><line x1="303.5" y1="295" x2="315.5" y2="295" stroke="#222" stroke-width="1" /><line x1="303.5" y1="298" x2="315.5" y2="298" stroke="#222" stroke-width="1" /><rect x="318.0" y="288.5" width="6" height="12" fill="#fff" stroke="#333" stroke-width="0.9" rx="1.5"/><rect x="324.8" y="288.5" width="6" height="12" fill="#fff" stroke="#333" stroke-width="0.9" rx="1.5"/><rect x="331.3" y="289.5" width="15" height="11" fill="#ddd" stroke="#333" stroke-width="0.9" /><line x1="332.8" y1="292" x2="344.8" y2="292" stroke="#222" stroke-width="1" /><line x1="332.8" y1="295" x2="344.8" y2="295" stroke="#222" stroke-width="1" /><line x1="332.8" y1="298" x2="344.8" y2="298" stroke="#222" stroke-width="1" /><rect x="347.3" y="288.5" width="6" height="12" fill="#fff" stroke="#333" stroke-width="0.9" rx="1.5"/><rect x="354.2" y="288.5" width="6" height="12" fill="#fff" stroke="#333" stroke-width="0.9" rx="1.5"/><rect x="360.7" y="289.5" width="15" height="11" fill="#ddd" stroke="#333" stroke-width="0.9" /><line x1="362.2" y1="292" x2="374.2" y2="292" stroke="#222" stroke-width="1" /><line x1="362.2" y1="295" x2="374.2" y2="295" stroke="#222" stroke-width="1" /><line x1="362.2" y1="298" x2="374.2" y2="298" stroke="#222" stroke-width="1" /><rect x="376.7" y="288.5" width="6" height="12" fill="#fff" stroke="#333" stroke-width="0.9" rx="1.5"/><line x1="354" y1="155.3" x2="372" y2="155.3" stroke="#151515" stroke-width="1.2" /><line x1="354" y1="162.3" x2="372" y2="162.3" stroke="#151515" stroke-width="1.2" /><line x1="356" y1="156" x2="356" y2="161.6" stroke="#555" stroke-width="0.7" /><line x1="358" y1="156" x2="358" y2="161.6" stroke="#555" stroke-width="0.7" /><line x1="360" y1="156" x2="360" y2="161.6" stroke="#555" stroke-width="0.7" /><line x1="362" y1="156" x2="362" y2="161.6" stroke="#555" stroke-width="0.7" /><line x1="364" y1="156" x2="364" y2="161.6" stroke="#555" stroke-width="0.7" /><line x1="366" y1="156" x2="366" y2="161.6" stroke="#555" stroke-width="0.7" /><line x1="368" y1="156" x2="368" y2="161.6" stroke="#555" stroke-width="0.7" /><line x1="370" y1="156" x2="370" y2="161.6" stroke="#555" stroke-width="0.7" /><text x="373" y="159.5" font-size="3" fill="#666" font-family="Liberation Sans" >rrna</text><line x1="297" y1="306.5" x2="315" y2="306.5" stroke="#151515" stroke-width="1.2" /><line x1="297" y1="313.3" x2="315" y2="313.3" stroke="#151515" stroke-width="1.2" /><line x1="299" y1="307" x2="299" y2="312.8" stroke="#555" stroke-width="0.7" /><line x1="301" y1="307" x2="301" y2="312.8" stroke="#555" stroke-width="0.7" /><line x1="303" y1="307" x2="303" y2="312.8" stroke="#555" stroke-width="0.7" /><line x1="305" y1="307" x2="305" y2="312.8" stroke="#555" stroke-width="0.7" /><line x1="307" y1="307" x2="307" y2="312.8" stroke="#555" stroke-width="0.7" /><line x1="309" y1="307" x2="309" y2="312.8" stroke="#555" stroke-width="0.7" /><line x1="311" y1="307" x2="311" y2="312.8" stroke="#555" stroke-width="0.7" /><line x1="313" y1="307" x2="313" y2="312.8" stroke="#555" stroke-width="0.7" /><ellipse cx="396.3" cy="147.3" rx="2" ry="1.6" fill="#111"/><ellipse cx="396.3" cy="220.3" rx="2" ry="1.6" fill="#111"/><circle cx="394.6" cy="315.7" r="2" fill="#3a8aa0" stroke="#2a4a5a" stroke-width="0.7"/><circle cx="394.6" cy="341" r="2" fill="#3a8aa0" stroke="#2a4a5a" stroke-width="0.7"/><circle cx="394.6" cy="366" r="2" fill="#3a8aa0" stroke="#2a4a5a" stroke-width="0.7"/><circle cx="394.6" cy="389" r="2" fill="#3a8aa0" stroke="#2a4a5a" stroke-width="0.7"/><circle cx="394.6" cy="414" r="2" fill="#3a8aa0" stroke="#2a4a5a" stroke-width="0.7"/><circle cx="394.6" cy="444" r="2" fill="#3a8aa0" stroke="#2a4a5a" stroke-width="0.7"/><circle cx="394.6" cy="470" r="2" fill="#3a8aa0" stroke="#2a4a5a" stroke-width="0.7"/><rect x="177.5" y="154.8" width="5" height="11" fill="#fff" stroke="#151515" stroke-width="1.1" /><line x1="178" y1="160" x2="181" y2="160" stroke="#151515" stroke-width="1.4" /><line x1="180.5" y1="166" x2="180.5" y2="169" stroke="#666" stroke-width="0.7" /><circle cx="182.5" cy="159.7" r="1.6" fill="#6a6ac0" stroke="#222" stroke-width="0.5"/></svg>
<div id="band" class="a"></div>
<div id="bl" class="a"></div>
<div id="task" class="a"></div>
<div class="a" style="left:337.5px;top:597px;width:39.5px;height:33px;background:#424040"></div>
<div class="a" style="left:180px;top:628px;width:33px;height:2px;background:#76b9ed"></div>
<div class="a" style="left:220px;top:628px;width:33px;height:2px;background:#76b9ed"></div>
<div class="a" style="left:300px;top:628px;width:33.5px;height:2px;background:#76b9ed"></div>
<div class="a" style="left:337.5px;top:628px;width:39.5px;height:2px;background:#76b9ed"></div>
<div class="a" style="left:381px;top:628px;width:32px;height:2px;background:#76b9ed"></div>
<div class="a" style="left:421px;top:628px;width:33px;height:2px;background:#76b9ed"></div>
<div class="a" style="left:461px;top:628px;width:33px;height:2px;background:#76b9ed"></div>
<div class="a" style="left:501px;top:628px;width:33px;height:2px;background:#76b9ed"></div>
<div class="a" style="left:542px;top:628px;width:32px;height:2px;background:#76b9ed"></div>
<svg class="a" style="left:147.5px;top:606.5px" width="15" height="13" viewBox="0 0 15 13"><path d="M1 1h9M1 12h9" stroke="#e8e8e8" stroke-width="1.2"/><rect x="2.5" y="3.5" width="6" height="6" fill="none" stroke="#e8e8e8" stroke-width="1.2"/><rect x="12" y="1" width="1.5" height="2" fill="#e8e8e8"/><rect x="12" y="5" width="1.5" height="7" fill="#e8e8e8"/></svg>
<svg class="a" style="left:186.5px;top:605.0px" width="19" height="16" viewBox="0 0 19 16"><path d="M0.5 2a1 1 0 0 1 1-1h5l2 2h9a1 1 0 0 1 1 1v10.5a1 1 0 0 1-1 1h-16a1 1 0 0 1-1-1z" fill="#f5c342"/><path d="M0.5 5h18v9.5a1 1 0 0 1-1 1h-16a1 1 0 0 1-1-1z" fill="#ffd863"/><path d="M6 9h7v6.5h-2.2v-3.5h-2.6v3.5H6z" fill="#2a8ad8"/></svg>
<svg class="a" style="left:226.0px;top:604.0px" width="21" height="18" viewBox="0 0 21 18"><path d="M10.5 0.5L20.5 7v10.5h-20V7z" fill="#1b6fc8"/><path d="M3.5 5.5h14v8h-14z" fill="#f0f0f0"/><path d="M0.5 7l10 6.5 10-6.5v10.5h-20z" fill="#2ba4ee"/></svg>
<svg class="a" style="left:268.0px;top:604.5px" width="18" height="18" viewBox="0 0 18 18"><circle cx="9" cy="9" r="8.8" fill="#fff"/><path d="M9 3a4 4 0 0 0-4 4c0 3 4 7.5 4 7.5s4-4.5 4-7.5a4 4 0 0 0-4-4z" fill="#34a853"/><path d="M9 3a4 4 0 0 0-3 1.4l3 3 3-3A4 4 0 0 0 9 3z" fill="#4285f4"/><path d="M5.3 5.4A4 4 0 0 0 5 7c0 1 .5 2.2 1.1 3.2L9 7z" fill="#ea4335"/><path d="M12.5 5.2L9 8.8l1.5 4.5c1-1.5 2.5-4 2.5-6.3 0-.6-.2-1.3-.5-1.8z" fill="#fbbc04"/><circle cx="9" cy="7" r="1.4" fill="#fff"/></svg>
<svg class="a" style="left:306.0px;top:604.5px" width="22" height="18" viewBox="0 0 22 18"><circle cx="12.5" cy="9" r="8.8" fill="#ed6c47"/><path d="M12.5 0.2a8.8 8.8 0 0 1 8.8 8.8h-8.8z" fill="#ff8f6b"/><path d="M12.5 9h8.8a8.8 8.8 0 0 1-8.8 8.8z" fill="#d35230"/><rect x="0.5" y="4" width="10.5" height="10.5" rx="1" fill="#c43e1c"/><path d="M3.8 12V6.5h2.3a1.7 1.7 0 0 1 0 3.4H3.8" fill="none" stroke="#fff" stroke-width="1.4"/></svg>
<svg class="a" style="left:347.0px;top:603.5px" width="20" height="19" viewBox="0 0 20 19"><path d="M10 0.5a9.5 9.5 0 0 1 9.5 9.5c0 2.5-2 4-4.5 4-2 0-3.5-.8-3.5-2.2 0-.5.4-.8.4-1.6A3.5 3.5 0 0 0 8 7c-4 0-6.5 3-7.2 5A9.5 9.5 0 0 1 10 0.5z" fill="#35c1f1"/><path d="M10 0.5c4 0 8 3 9.3 7 .2 1-1 3-4 3-2 0-3.3-1-3.7-2.5C10.5 4.5 7 3 4 4A9.5 9.5 0 0 1 10 0.5z" fill="#5ed46a"/><path d="M0.8 12C1.5 9 4.5 6.5 8 6.5a4 4 0 0 1 3.5 3.5c0 1.5-1.5 1.5-1.5 3.5 0 3 3.5 4.5 7 3.5A9.5 9.5 0 0 1 0.8 12z" fill="#1068c4"/></svg>
<svg class="a" style="left:387.0px;top:604.0px" width="21" height="18" viewBox="0 0 21 18"><rect x="6" y="0.5" width="14.5" height="17" rx="1.2" fill="#21a366"/><path d="M6 6h14.5v6H6z" fill="#107c41"/><path d="M13 0.5h6.3a1.2 1.2 0 0 1 1.2 1.2V6H13z" fill="#33c481"/><rect x="0.5" y="4" width="10.5" height="10.5" rx="1" fill="#185c37"/><path d="M3.3 6.5l5 6M8.3 6.5l-5 6" stroke="#fff" stroke-width="1.4"/></svg>
<svg class="a" style="left:428.5px;top:603.5px" width="19.5" height="18.5" viewBox="0 0 19.5 18.5"><circle cx="10" cy="9.5" r="9" fill="#3a66c8"/><circle cx="10" cy="9.5" r="9" fill="none" stroke="#6f9ae8" stroke-width="0.8"/><path d="M2 17C4 10 8 4 11.5 4c2 0 3.5 2 4 5" fill="none" stroke="#fff" stroke-width="1.8" stroke-linecap="round"/><circle cx="16" cy="11.5" r="1" fill="#fff"/></svg>
<svg class="a" style="left:469.0px;top:604.5px" width="17" height="17" viewBox="0 0 17 17"><g transform="translate(8.5 8.5)"><circle r="5.6" fill="none" stroke="#fff" stroke-width="2.4"/><rect x="-1.3" y="-8" width="2.6" height="3.2" fill="#fff" transform="rotate(0)"/><rect x="-1.3" y="-8" width="2.6" height="3.2" fill="#fff" transform="rotate(45)"/><rect x="-1.3" y="-8" width="2.6" height="3.2" fill="#fff" transform="rotate(90)"/><rect x="-1.3" y="-8" width="2.6" height="3.2" fill="#fff" transform="rotate(135)"/><rect x="-1.3" y="-8" width="2.6" height="3.2" fill="#fff" transform="rotate(180)"/><rect x="-1.3" y="-8" width="2.6" height="3.2" fill="#fff" transform="rotate(225)"/><rect x="-1.3" y="-8" width="2.6" height="3.2" fill="#fff" transform="rotate(270)"/><rect x="-1.3" y="-8" width="2.6" height="3.2" fill="#fff" transform="rotate(315)"/></g></svg>
<svg class="a" style="left:507.0px;top:603.5px" width="21" height="19" viewBox="0 0 21 19"><path d="M5 16l5-2 6 2.5-5 2z" fill="#ccc"/><rect x="4" y="0.5" width="16" height="12" rx="1" fill="#d8dde2"/><rect x="5.5" y="2" width="13" height="9" fill="#e8f4fa"/><path d="M6 9l2-1 1.5-4 1.5 5 1.5-3 1.5 2 2-4 1.5 5" fill="none" stroke="#2a8ad0" stroke-width="1"/><rect x="0.5" y="7" width="5" height="6" fill="#9aa" /><path d="M1 8h4v4H1z" fill="#4caf50"/></svg>
<svg class="a" style="left:550.0px;top:603.5px" width="16" height="19" viewBox="0 0 16 19"><rect x="0.5" y="0.5" width="15" height="18" rx="1.5" fill="#5d6770"/><rect x="2.5" y="2.5" width="11" height="3.5" fill="#4fc3f7"/><rect x="2.5" y="7.5" width="3" height="2.2" fill="#e8ecef"/><rect x="6.3" y="7.5" width="3" height="2.2" fill="#e8ecef"/><rect x="10.1" y="7.5" width="3" height="2.2" fill="#e8ecef"/><rect x="2.5" y="10.3" width="3" height="2.2" fill="#e8ecef"/><rect x="6.3" y="10.3" width="3" height="2.2" fill="#e8ecef"/><rect x="10.1" y="10.3" width="3" height="2.2" fill="#e8ecef"/><rect x="2.5" y="13.1" width="3" height="2.2" fill="#e8ecef"/><rect x="6.3" y="13.1" width="3" height="2.2" fill="#e8ecef"/><rect x="10.1" y="13.1" width="3" height="2.2" fill="#e8ecef"/><rect x="2.5" y="15.899999999999999" width="3" height="2.2" fill="#e8ecef"/><rect x="6.3" y="15.899999999999999" width="3" height="2.2" fill="#e8ecef"/><rect x="10.1" y="15.899999999999999" width="3" height="2.2" fill="#e8ecef"/><rect x="10.1" y="13.1" width="3" height="5" fill="#1d5fb0"/></svg>
<svg class="a" style="left:699.5px;top:604.0px" width="21" height="19" viewBox="0 0 21 19"><path d="M1 10.5a8 8 0 0 1 16 0z" fill="#7cc4f0"/><path d="M9 10.5v6a1.5 1.5 0 0 1-3 0" fill="none" stroke="#bbb" stroke-width="1.1"/><path d="M13.5 1.5l-1 2M16.5 1l-1 2M19 2.5l-1 2M15 4.5l-1 2M18 5l-1 2" stroke="#7cc4f0" stroke-width="1.1"/></svg>
<div class="a" style="left:726px;top:605px;font-size:12.5px;line-height:16px;color:#f4f4f4;white-space:nowrap">Noc...</div>
<svg class="a" style="left:775.0px;top:609.0px" width="11" height="7" viewBox="0 0 11 7"><path d="M0.8 6.2L5.5 1.2l4.7 5" fill="none" stroke="#f0f0f0" stroke-width="1.2"/></svg>
<svg class="a" style="left:792.5px;top:606.5px" width="15" height="14" viewBox="0 0 15 14"><path d="M1 4.5h2.5L7 1.5v11L3.5 9.5H1z" fill="none" stroke="#f0f0f0" stroke-width="1.1"/><path d="M9 5a2.5 2.5 0 0 1 0 4M10.8 3.5a5 5 0 0 1 0 7M12.6 2a7 7 0 0 1 0 10" fill="none" stroke="#f0f0f0" stroke-width="1.1"/></svg>
<svg class="a" style="left:812.5px;top:608.0px" width="14" height="11" viewBox="0 0 14 11"><rect x="4" y="3" width="9" height="6.5" rx="1" fill="none" stroke="#f0f0f0" stroke-width="1.1"/><rect x="5.5" y="4.5" width="6" height="3.5" fill="#f0f0f0"/><path d="M0.5 4.5h3M1.5 2.5v4M2.5 0.5v2" stroke="#f0f0f0" stroke-width="1"/></svg>
<div class="a" style="left:835px;top:607px;width:12px;height:12px;border:1.2px solid #f0f0f0;border-radius:2px"></div>
<div class="a" style="left:638.5px;top:590.5px;width:35.5px;height:6px;background:#bdbdbd"></div>
<div class="a" style="left:574px;top:593px;width:15px;height:1.2px;background:#4a4a4a"></div>
<div class="a" style="left:648px;top:590.5px;width:14px;height:1.2px;background:#555"></div>
<div class="a" style="left:685px;top:590.5px;width:6px;height:1.2px;background:#555"></div>
<div class="a" style="left:693px;top:590.5px;width:6px;height:1.2px;background:#555"></div>
<div class="a" style="left:720px;top:590.5px;width:15px;height:1.2px;background:#555"></div>
<div class="a" style="left:760px;top:590.5px;width:7px;height:1.2px;background:#555"></div>
<div class="a" style="left:830px;top:590.5px;width:6px;height:1.2px;background:#555"></div>
<svg class="a" style="left:2.0px;top:589.5px" width="15" height="5" viewBox="0 0 15 5"><path d="M1 0.5l2.5 3.5 2.5-3.5M8 4l2.5-3.5L13 4" fill="none" stroke="#444" stroke-width="1"/></svg>
</body></html>
